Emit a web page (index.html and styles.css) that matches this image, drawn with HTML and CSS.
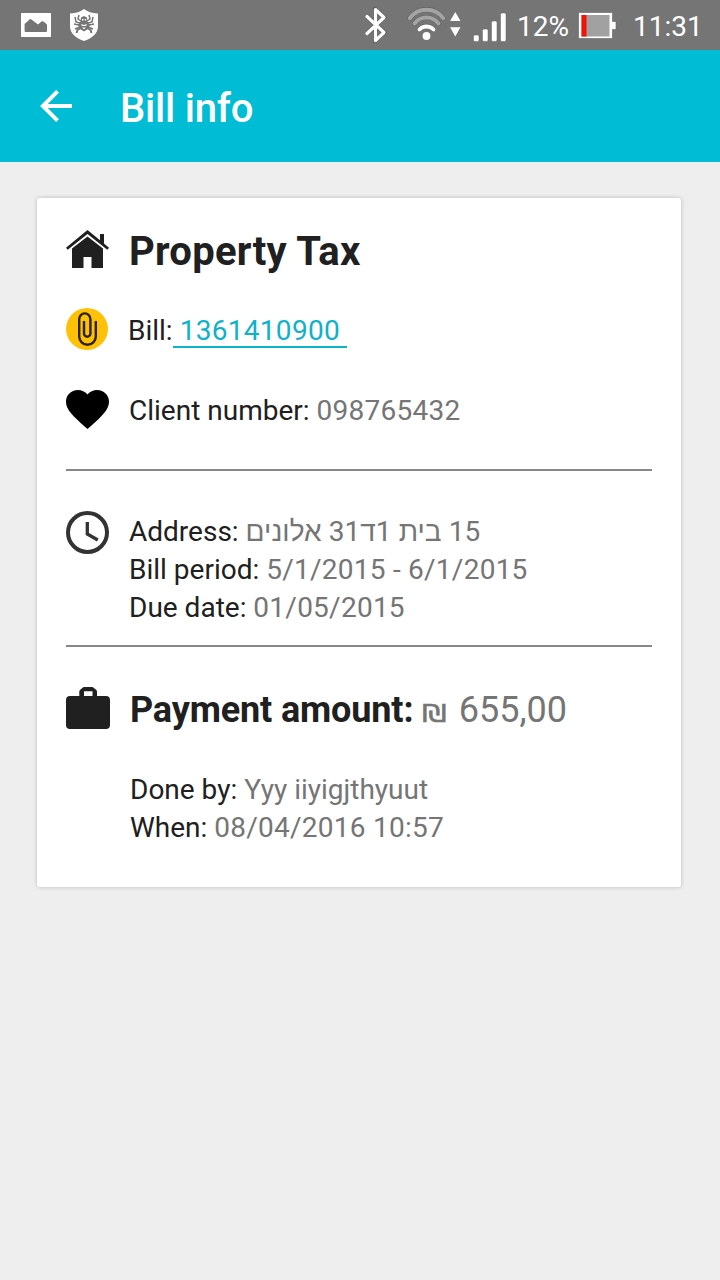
FILE: index.html
```html
<!DOCTYPE html>
<html lang="en">
<head>
<meta charset="utf-8">
<title>Bill info</title>
<link rel="stylesheet" href="styles.css">
</head>
<body>
<div class="status-bar">
  <svg class="status-picture" width="30" height="24" viewBox="0 0 30 24"><path fill="#fff" fill-rule="evenodd" d="M.6 0h28.800q.6 0 .6.6v22.800q0 .6-.6.6H.6q-.6 0-.6-.6V.6Q0 0 .6 0ZM3.600 18q0 1 1 1h20.400q1 0 1-1v-6.500L22.500 8.500q-1-.6-2 0L17 11.500 10.500 6.500q-1-.8-2 0L3.600 11Z"/></svg>
  <svg class="status-shield" width="28" height="32" viewBox="0 0 28 32"><path fill="#fff" d="M14 0q5 4 14 4.500V17q0 10-14 15Q0 27 0 17V4.500Q9 4 14 0Z"/><g fill="none" stroke="#757575" stroke-width="1.500"><path d="M11 12 8 10 9 6M17 12l3-2-1-4M10 14l-4-1-1-5M18 14l4-1 1-5M9 16l-5-1M19 16l5-1M10 18l-5 2M18 18l5 2"/><path stroke-width="2" d="M10 19.500 7.500 21l-1 3M18 19.500l2.500 1.500 1 3"/></g><path fill="#757575" d="M11 8.500 14 7l3 1.500.5 4L20 16l-2 4-4 2.500L10 20l-2-4 2.500-3.500Z"/><path fill="#fff" d="M12 10h1.500v1.500H12zm2.700 0h1.500v1.500h-1.500zM11 15l3 1 3-1-1 2h-4zM12 18.500h4l-2 1.700z"/></svg>
  <svg class="status-bluetooth" width="24" height="36" viewBox="0 0 24 36"><path d="m3 9.500 17 16-8.500 8v-31l8.500 8-17 16" fill="none" stroke="#5e5e5e" stroke-width="4.500"/><path d="m3 9.500 17 16-8.500 8v-31l8.500 8-17 16" fill="none" stroke="#fff" stroke-width="3.200" stroke-linecap="round" stroke-linejoin="round"/></svg>
  <svg class="status-wifi" width="54" height="36" viewBox="0 0 54 36"><g transform="translate(1)"><g fill="none" stroke-linecap="round"><g stroke="#606060" stroke-width="5.200"><path d="M2.700 13.200A20.800 20.800 0 0 1 36.300 13.200M7.500 18.500A15 15 0 0 1 31.500 18.500M12.500 24.500A9.500 9.500 0 0 1 26.500 24.500"/></g><g stroke="#a3a3a3" stroke-width="4"><path d="M2.700 13.200A20.800 20.800 0 0 1 36.300 13.200M7.500 18.500A15 15 0 0 1 31.500 18.500"/></g><path stroke="#fff" stroke-width="4" d="M12.500 24.500A9.500 9.500 0 0 1 26.500 24.500"/></g><circle cx="19.500" cy="31" r="3.900" fill="#fff"/><path fill="#fff" d="m48.300 7 5.200 9h-10.400ZM43.100 22.300h10.400L48.300 31.500Z"/></g></svg>
  <svg class="status-signal" width="34" height="30" viewBox="0 0 34 30"><g fill="#fff" stroke="#656565" stroke-width=".5"><rect x=".5" y="23" width="5.500" height="6.500" rx="1.500"/><rect x="9.500" y="17" width="5.500" height="12.500" rx="1.500"/><rect x="18.500" y="9" width="5.500" height="20.500" rx="1.500"/><rect x="27.500" y="1" width="5.500" height="28.500" rx="1.500"/></g></svg>
  <span class="battery-level">12%</span>
  <svg class="status-battery" width="40" height="28" viewBox="0 0 40 28"><path fill="#fff" stroke="#606060" stroke-width=".6" d="M.5.5h34v9h3.500v8h-3.500v9H.5Z"/><path fill="#a1a1a1" d="M3.500 3h28v21.500h-28z"/><path fill="#f51105" d="M3.500 3h5v21.500h-5z"/></svg>
  <span class="clock">11:31</span>
</div>
<header class="app-bar">
  <svg class="back" width="32" height="32" viewBox="0 0 32 32"><path d="M32 16H3M17.500 1.400 2.900 16l14.600 14.600" fill="none" stroke="#fff" stroke-width="4"/></svg>
  <h1 class="title">Bill info</h1>
</header>
<main class="card">
  <section class="row row-heading">
    <svg class="icon icon-house" width="43" height="38" viewBox="0 0 43 38"><path fill="#202020" d="M21.500 0 34 10.300V4h4v9.600l5 4.200-1.700 2L21.500 4 1.700 19.800 0 17.800ZM6 18.500 21.500 6.500 37 18.500V38H25.500V27h-8v11H6Z"/></svg>
    <h2 class="heading">Property Tax</h2>
  </section>
  <section class="row row-bill">
    <svg class="icon icon-clip" width="42" height="42" viewBox="0 0 42 42"><circle cx="21" cy="21" r="21" fill="#ffc107"/><path d="M29.800 13v15.500a8.300 8.300 0 0 1-16.600 0V11a5.600 5.600 0 0 1 11.200 0v14.500a3.200 3.200 0 0 1-6.400 0V13" fill="none" stroke="#2b2208" stroke-width="2.400"/></svg>
    <p class="text">Bill:<a class="bill-link">1361410900</a></p>
  </section>
  <section class="row row-client">
    <svg class="icon icon-heart" width="43" height="39" viewBox="2 3 20 18.350" preserveAspectRatio="none"><path d="M12 21.350l-1.450-1.320C5.400 15.360 2 12.280 2 8.500 2 5.420 4.420 3 7.500 3c1.740 0 3.410.81 4.500 2.090C13.090 3.810 14.760 3 16.500 3 19.580 3 22 5.420 22 8.500c0 3.780-3.400 6.860-8.550 11.540z"/></svg>
    <p class="text">Client number: <span class="value number">098765432</span></p>
  </section>
  <hr class="divider">
  <section class="row row-address">
    <svg class="icon icon-clock" width="43" height="43" viewBox="0 0 43 43"><g fill="none" stroke="#333"><circle cx="21.500" cy="21.500" r="19.500" stroke-width="4"/><path d="M21.300 11v12l10.500 6" stroke-width="3.300"/></g></svg>
    <div class="text">
      <p>Address: <bdi class="value hebrew" dir="rtl" lang="he">15 בית 1ד31 אלונים</bdi></p>
      <p>Bill period: <span class="value number">5/1/2015 - 6/1/2015</span></p>
      <p>Due date: <span class="value number">01/05/2015</span></p>
    </div>
  </section>
  <hr class="divider">
  <section class="row row-payment">
    <svg class="icon icon-case" width="44" height="42" viewBox="0 0 44 42"><path fill="#202020" fill-rule="evenodd" d="M4 9h9.300V4.500Q13.300 3.500 14 3L16.500.7q.7-.7 1.700-.7h7.800q1 0 1.700.7L30.300 3q.7.500.7 1.500V9h9q4 0 4 4v25q0 4-4 4H4q-4 0-4-4V13q0-4 4-4ZM18 9h8.500V4.300H18Z"/></svg>
    <p class="text amount"><b class="amount-label">Payment amount:</b> <span class="value"><span class="shekel">₪</span> 655,00</span></p>
  </section>
  <section class="details">
    <p>Done by: <span class="value">Yyy iiyigjthyuut</span></p>
    <p>When: <span class="value number">08/04/2016 10:57</span></p>
  </section>
</main>
</body>
</html>
```
FILE: styles.css
```css
* { box-sizing: border-box; }

body {
  margin: 0;
  min-height: 1280px;
  background: #eee;
  color: #202020;
  font-family: Roboto, "Noto Sans", sans-serif;
  font-size: 28px;
  line-height: 38px;
}

p, h1, h2 { margin: 0; }
svg { display: block; flex: none; }

.status-bar {
  display: flex;
  align-items: flex-start;
  height: 50px;
  padding-left: 21px;
  background: #757575;
  color: #fff;
  white-space: nowrap;
}
.status-picture { margin-top: 13px; }
.status-shield { margin: 9px 0 0 19px; }
.status-bluetooth { margin: 7px 0 0 266px; }
.status-wifi { margin: 5px 0 0 18px; overflow: visible; }
.status-signal { margin: 12px 0 0 13px; }
.battery-level { width: 71px; padding: 8px 0 0 10px; }
.status-battery { margin-top: 12px; }
.clock { margin: 8px 0 0 15px; }

.app-bar {
  display: flex;
  align-items: center;
  height: 112px;
  padding-left: 40px;
  background: #00bcd4;
  color: #fff;
}
.title {
  margin: 6px 0 0 48px;
  font-size: 40px;
  font-weight: 500;
  letter-spacing: -.2px;
  line-height: 48px;
}

.card {
  width: 644px;
  height: 689px;
  margin: 36px 0 0 37px;
  padding: 30px 29px 0;
  background: #fff;
  border-radius: 3px;
  box-shadow: 0 0 4px rgba(0, 0, 0, .22);
}
.row { display: flex; align-items: flex-start; white-space: nowrap; }
.icon { margin-right: 20px; }
.value { color: #757575; }
.number { letter-spacing: .25px; }

.row-heading { height: 84px; }
.icon-house { margin-top: 2px; }
.heading { font-size: 40px; letter-spacing: .27px; line-height: 48px; }

.row-bill { height: 80px; }
.icon-clip { margin-top: -4px; }
.bill-link {
  display: inline-block;
  height: 36px;
  padding: 0 7px;
  border-bottom: 2px solid #0eb2c9;
  color: #0eb2c9;
  letter-spacing: .3px;
}

.row-client { height: 77px; }
.icon-heart { margin-top: -2px; }

.divider { height: 2px; margin: 0; border: 0; background: #888; }

.row-address { height: 174px; padding-top: 42px; }
.icon-clock { margin-top: -2px; }
.hebrew { letter-spacing: .06px; }

.row-payment { height: 124px; padding-top: 41px; }
.icon-case { margin-top: -1px; }
.amount { font-size: 36px; line-height: 44px; }
.amount-label { letter-spacing: -.14px; }
.shekel {
  display: inline-block;
  width: 27.500px;
  font-family: "DejaVu Sans", sans-serif;
  font-size: 26px;
  line-height: 30px;
  -webkit-text-stroke: .5px;
  transform: scale(1.2, .93);
  transform-origin: 0 80%;
}
.details { padding-left: 64px; }
```
